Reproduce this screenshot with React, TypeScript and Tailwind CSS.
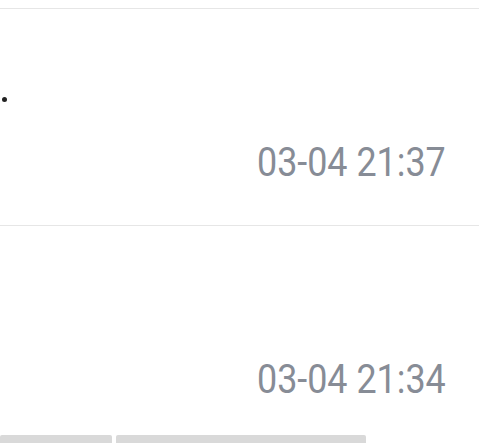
export default function App() {
  const rows = [
    { time: '03-04 21:37', dot: true },
    { time: '03-04 21:34', dot: false },
  ];

  return (
    <div className="w-[479px] h-[443px] overflow-hidden bg-white font-['Roboto',sans-serif]">
      <div className="h-[9px] border-b border-[#e6e6e6]" />
      {rows.map((row, i) => (
        <div key={i} className={`h-[217px] flex flex-col ${i === 0 ? 'border-b border-[#e6e6e6]' : ''}`}>
          <div className="h-[88px]" />
          <div className="h-[5px] flex pl-[2px]">
            {row.dot && <div className="w-[5px] h-[5px] rounded-full bg-[#222]" />}
          </div>
          <div className="flex justify-end pr-[33px] mt-[36px]">
            <span className="text-[41px] leading-[48px] text-[#878c96] scale-x-[0.875] origin-right whitespace-nowrap">
              {row.time}
            </span>
          </div>
          {i === 1 && (
            <div className="flex gap-[4px] mt-auto">
              <div className="w-[112px] h-[8px] bg-[#d9d9d9] rounded-t-[2px]" />
              <div className="w-[250px] h-[8px] bg-[#d9d9d9] rounded-t-[2px]" />
            </div>
          )}
        </div>
      ))}
    </div>
  );
}
